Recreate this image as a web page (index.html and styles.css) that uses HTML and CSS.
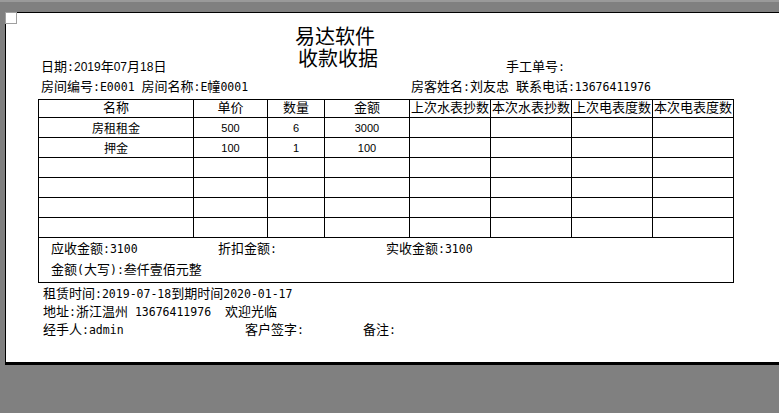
FILE: index.html
```html
<!DOCTYPE html>
<html lang="zh-CN">
<head>
<meta charset="utf-8">
<title>收款收据</title>
<link rel="stylesheet" href="styles.css">
</head>
<body>
<div class="topstrip"></div>
<div class="corner"></div>
<div class="page">
  <div class="head">
    <div class="h-left">日期<span class="m">:</span><span class="sn">2019</span>年<span class="sn">07</span>月<span class="sn">18</span>日</div>
    <div class="h-title">
      <div class="t1">易达软件</div>
      <div class="t2">收款收据</div>
    </div>
    <div class="h-right">手工单号<span class="m">:</span></div>
  </div>
  <div class="info">
    <div class="i-left">房间编号<span class="m">:E0001 </span>房间名称<span class="m">:E</span>幢<span class="m">0001</span></div>
    <div class="i-right">房客姓名<span class="m">:</span>刘友忠<span class="m"> </span>联系电话<span class="m">:13676411976</span></div>
  </div>
  <table class="grid">
    <colgroup>
      <col class="c1"><col class="c2"><col class="c3"><col class="c4">
      <col class="c5"><col class="c5"><col class="c5"><col class="c5">
    </colgroup>
    <thead>
      <tr class="hd">
        <th class="ctr">名称</th>
        <th class="ctr">单价</th>
        <th class="ctr">数量</th>
        <th class="ctr">金额</th>
        <th>上次水表抄数</th>
        <th>本次水表抄数</th>
        <th>上次电表度数</th>
        <th>本次电表度数</th>
      </tr>
    </thead>
    <tbody>
      <tr class="r"><td>房租租金</td><td class="num">500</td><td class="num">6</td><td class="num">3000</td><td></td><td></td><td></td><td></td></tr>
      <tr class="r"><td>押金</td><td class="num">100</td><td class="num">1</td><td class="num">100</td><td></td><td></td><td></td><td></td></tr>
      <tr class="r"><td></td><td></td><td></td><td></td><td></td><td></td><td></td><td></td></tr>
      <tr class="r"><td></td><td></td><td></td><td></td><td></td><td></td><td></td><td></td></tr>
      <tr class="r"><td></td><td></td><td></td><td></td><td></td><td></td><td></td><td></td></tr>
      <tr class="r"><td></td><td></td><td></td><td></td><td></td><td></td><td></td><td></td></tr>
    </tbody>
  </table>
  <div class="sum">
    <div class="sum-row">
      <div class="s1">应收金额<span class="m">:3100</span></div>
      <div class="s2">折扣金额<span class="m">:</span></div>
      <div class="s3">实收金额<span class="m">:3100</span></div>
    </div>
    <div class="sum-row second">金额<span class="m">(</span>大写<span class="m">):</span>叁仟壹佰元整</div>
  </div>
  <div class="foot">
    <div class="f-line">租赁时间<span class="m">:2019-07-18</span>到期时间<span class="m">2020-01-17</span></div>
    <div class="f-line">地址<span class="m">:</span>浙江温州<span class="m"> 13676411976  </span>欢迎光临</div>
    <div class="f-line f-row">
      <div class="f1">经手人<span class="m">:admin</span></div>
      <div class="f2">客户签字<span class="m">:</span></div>
      <div class="f3">备注<span class="m">:</span></div>
    </div>
  </div>
</div>
</body>
</html>
```
FILE: styles.css
```css
html, body {
  margin: 0;
  padding: 0;
}
body {
  background: #808080;
  width: 779px;
  height: 413px;
  overflow: hidden;
  position: relative;
  font-family: "Noto Sans CJK SC", "Noto Sans", sans-serif;
  font-size: 13px;
  color: #000;
}
.topstrip {
  height: 2px;
  background: #9a9a9a;
}
.corner {
  position: absolute;
  left: 5px;
  top: 12px;
  width: 10px;
  height: 10px;
  border: 1px solid #a0a0a0;
  background: #fff;
}
.page {
  margin-top: 10px;
  margin-left: 5px;
  width: 774px;
  height: 349px;
  background: #fff;
  border-left: 1px solid #000;
  border-top: 1px solid #000;
  border-bottom: 3px solid #000;
}
.m {
  font-family: "DejaVu Sans Mono", "Liberation Mono", monospace;
  font-size: 11.5px;
  line-height: 10px;
  white-space: pre;
}
.sn {
  font-family: "Liberation Sans", sans-serif;
  font-size: 12px;
  line-height: 10px;
}
.head {
  display: flex;
  align-items: flex-start;
  padding-top: 12px;
  padding-left: 35px;
}
.h-left {
  width: 254px;
  margin-top: 31px;
  line-height: 20px;
  white-space: nowrap;
}
.h-title {
  width: 211px;
  font-size: 20px;
  line-height: 22px;
  white-space: nowrap;
}
.t2 {
  margin-left: 3px;
}
.h-right {
  margin-top: 31px;
  line-height: 20px;
  white-space: nowrap;
}
.info {
  display: flex;
  padding-left: 35px;
  line-height: 20px;
  white-space: nowrap;
}
.i-left {
  width: 370px;
}
.grid {
  margin-top: 3px;
  margin-left: 32px;
  width: 696px;
  table-layout: fixed;
  border-collapse: separate;
  border-spacing: 0;
  border-left: 1px solid #000;
  border-top: 1px solid #000;
}
.c1 { width: 155px; }
.c2 { width: 74px; }
.c3 { width: 57px; }
.c4 { width: 85px; }
.c5 { width: 81px; }
.grid th,
.grid td {
  padding: 0;
  border-right: 1px solid #000;
  border-bottom: 1px solid #000;
  white-space: nowrap;
}
.grid th {
  font-weight: normal;
  font-size: 13px;
  line-height: 13px;
  vertical-align: top;
  text-align: left;
  padding-left: 1px;
}
.grid th.ctr {
  text-align: center;
  padding-left: 0;
}
.grid tr.hd {
  height: 18px;
}
.grid tr.r {
  height: 20px;
}
.grid td {
  font-size: 12px;
  line-height: 14px;
  text-align: center;
  vertical-align: middle;
}
.grid td.num {
  font-family: "Liberation Sans", sans-serif;
  font-size: 11px;
}
.sum {
  margin-left: 32px;
  width: 696px;
  height: 45px;
  box-sizing: border-box;
  border-left: 1px solid #000;
  border-right: 1px solid #000;
  border-bottom: 1px solid #000;
  padding-left: 12px;
}
.sum-row {
  display: flex;
  line-height: 20px;
  white-space: nowrap;
}
.sum-row.second {
  display: block;
  margin-top: 1px;
}
.s1 { width: 167px; }
.s2 { width: 168px; }
.foot {
  margin-top: 1px;
  padding-left: 37px;
  line-height: 18px;
  white-space: nowrap;
}
.f-row {
  display: flex;
}
.f1 { width: 202px; }
.f2 { width: 118px; }
```
